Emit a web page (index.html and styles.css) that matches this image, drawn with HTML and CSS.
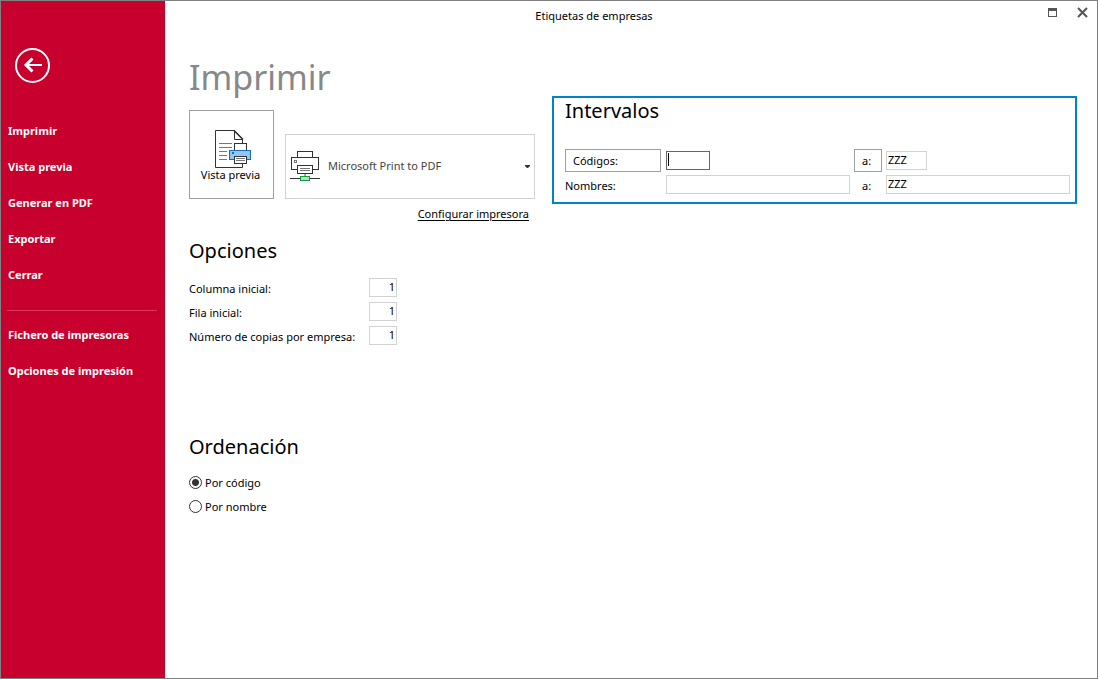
FILE: index.html
```html
<!DOCTYPE html>
<html lang="es">
<head>
<meta charset="utf-8">
<title>Etiquetas de empresas</title>
<link rel="stylesheet" href="styles.css">
</head>
<body>
<div class="window">
  <nav class="sidebar">
    <button class="back" type="button" aria-label="Volver">
      <svg width="35" height="35" viewBox="0 0 35 35" fill="none" stroke="#fff">
        <circle cx="17.500" cy="17.500" r="16.500" stroke-width="2"/>
        <path d="M10 17H27" stroke-width="2"/>
        <path d="M17.500 10.500L11 17L17.500 23.500" stroke-width="3"/>
      </svg>
    </button>
    <ul class="menu">
      <li><a href="#">Imprimir</a></li>
      <li><a href="#">Vista previa</a></li>
      <li><a href="#">Generar en PDF</a></li>
      <li><a href="#">Exportar</a></li>
      <li><a href="#">Cerrar</a></li>
    </ul>
    <hr class="divider">
    <ul class="menu">
      <li><a href="#">Fichero de impresoras</a></li>
      <li><a href="#">Opciones de impresión</a></li>
    </ul>
  </nav>
  <div class="workspace">
    <header class="titlebar">
      <span class="caption">Etiquetas de empresas</span>
      <div class="controls">
        <button type="button" aria-label="Maximizar">
          <svg width="11" height="11" viewBox="0 0 11 11" fill="none" stroke="#555" shape-rendering="crispEdges">
            <rect x="1.500" y="1.500" width="8" height="8"/>
            <path d="M1 2.500H10" stroke-width="3"/>
          </svg>
        </button>
        <button type="button" aria-label="Cerrar ventana">
          <svg width="11" height="11" viewBox="0 0 11 11" fill="none" stroke="#555" stroke-width="2">
            <path d="M1 1L10 10M10 1L1 10"/>
          </svg>
        </button>
      </div>
    </header>
    <main class="content">
      <div class="column">
        <h1 class="title">Imprimir</h1>
        <section class="printing">
          <button class="preview" type="button">
            <svg width="38" height="40" viewBox="0 0 38 40" fill="#fff" stroke="#333">
              <path d="M1.500 1.500H20.500L28.500 9.500V38.500H1.500Z"/>
              <path d="M20.500 1.500V10.500H28.500" fill="none"/>
              <path d="M20 1.500L29 10.500" stroke-width="1.500"/>
              <path d="M5 14.500H18M5 18.500H18M5 22.500H13M5 26.500H13M5 30.500H13" stroke="#777"/>
              <rect x="20.500" y="14.500" width="12" height="7"/>
              <rect x="15.500" y="21.500" width="21" height="9" fill="#92c5f0" stroke="#1b6db5"/>
              <rect x="18" y="23" width="2" height="2" fill="#1b6db5" stroke="none"/>
              <rect x="20.500" y="27.500" width="12" height="7"/>
              <path d="M22 29.500H31M22 31.500H31" stroke="#777"/>
            </svg>
            <span>Vista previa</span>
          </button>
          <div class="printer">
            <svg class="printer-icon" width="30" height="31" viewBox="0 0 30 31" fill="#fff" stroke="#333">
              <rect x="7.500" y="1.500" width="15" height="6"/>
              <rect x="1.500" y="7.500" width="27" height="12"/>
              <rect x="4.500" y="10.500" width="2" height="2" stroke="#777"/>
              <rect x="7.500" y="15.500" width="15" height="8"/>
              <path d="M10 18.500H20M10 20.500H20" stroke="#777"/>
              <path d="M15 24V27" stroke="#aaa" stroke-width="2"/>
              <path d="M0 28.500H30"/>
              <rect x="10.500" y="26.500" width="9" height="4" fill="#b5dfb8" stroke="#149a44"/>
            </svg>
            <select class="printer-select" aria-label="Impresora">
              <option>Microsoft Print to PDF</option>
            </select>
            <svg class="arrow" width="5" height="3" viewBox="0 0 5 3" fill="#333"><path d="M0 0H5V1L3 3H2L0 1Z"/></svg>
          </div>
          <a class="configure" href="#">Configurar impresora</a>
        </section>
        <section class="options">
          <h2>Opciones</h2>
          <div class="option"><label for="col">Columna inicial:</label><input id="col" type="text" value="1"></div>
          <div class="option"><label for="row">Fila inicial:</label><input id="row" type="text" value="1"></div>
          <div class="option"><label for="copies">Número de copias por empresa:</label><input id="copies" type="text" value="1"></div>
        </section>
        <section class="order">
          <h2>Ordenación</h2>
          <label class="choice"><input type="radio" name="order" checked>Por código</label>
          <label class="choice"><input type="radio" name="order">Por nombre</label>
        </section>
      </div>
      <section class="ranges">
        <h2>Intervalos</h2>
        <div class="range-grid">
          <button class="pick" type="button">Códigos:</button>
          <div class="code focused"><input type="text" aria-label="Código desde"><span class="caret"></span></div>
          <button class="pick" type="button">a:</button>
          <div class="code"><input type="text" value="ZZZ" aria-label="Código hasta"></div>
          <label class="name" for="from">Nombres:</label>
          <input class="from" id="from" type="text">
          <label class="name to" for="until">a:</label>
          <input id="until" type="text" value="ZZZ">
        </div>
      </section>
    </main>
  </div>
</div>
</body>
</html>
```
FILE: styles.css
```css
* { box-sizing: border-box; }

body {
  margin: 0;
  font: 11px/16px "Noto Sans", "Open Sans", sans-serif;
  color: #000;
  background: #fff;
}

button, input, select { font: inherit; color: inherit; margin: 0; }

.window {
  display: flex;
  min-height: 100vh;
  border: 1px solid #808080;
}

.sidebar {
  flex: none;
  width: 164px;
  padding: 47px 8px 0 6px;
  background: #c8002d;
}

.back {
  display: block;
  margin: 0 0 30px 8px;
  padding: 0;
  border: 0;
  background: none;
}
.back svg, .controls svg { display: block; }

.menu { margin: 0; padding: 0 0 0 1px; list-style: none; }
.menu a {
  display: block;
  height: 36px;
  line-height: 36px;
  color: #fff;
  font-weight: 700;
  text-decoration: none;
}
.divider {
  height: 1px;
  margin: 17px 0 6px;
  border: 0;
  background: #d63a5c;
}

.workspace { flex: 1; min-width: 0; }

.titlebar { display: flex; height: 30px; }
.caption {
  flex: 1;
  margin-left: -24px;
  padding-top: 7px;
  text-align: center;
}
.controls {
  display: flex;
  align-items: flex-start;
  gap: 19px;
  padding: 6px 9px 0 0;
}
.controls button { padding: 0; border: 0; background: none; }

.content {
  display: flex;
  align-items: flex-start;
  gap: 17px;
  padding: 0 20px 20px 24px;
}
.column { flex: none; width: 346px; }

.title {
  margin: 0;
  padding-top: 23px;
  font-size: 34px;
  line-height: 46px;
  font-weight: 400;
  color: #888;
}
h2 {
  margin: 0;
  font-size: 20px;
  line-height: 28px;
  font-weight: 400;
}

.printing {
  display: grid;
  grid-template-columns: 85px 1fr;
  column-gap: 11px;
  row-gap: 7px;
  margin-top: 10px;
}
.preview {
  display: flex;
  flex-direction: column;
  align-items: center;
  height: 89px;
  padding: 18px 2px 0 0;
  border: 1px solid #a0a0a0;
  background: #fff;
}
.preview svg { margin-left: 5px; }
.preview span { margin-top: -2px; }
.printer {
  position: relative;
  align-self: end;
  height: 65px;
}
.printer-select {
  width: 100%;
  height: 100%;
  padding: 0 20px 2px 42px;
  border: 1px solid #d2d2d2;
  border-radius: 0;
  background: #fff;
  color: #444;
  appearance: none;
}
.printer-icon { position: absolute; left: 5px; top: 16px; pointer-events: none; }
.arrow { position: absolute; right: 5px; top: 31px; pointer-events: none; }
.configure {
  grid-column: 2;
  justify-self: end;
  margin-right: 6px;
  color: #000;
  text-underline-offset: 2px;
}

input[type="text"] {
  width: 100%;
  height: 19px;
  padding: 0 2px 2px 1px;
  border: 1px solid #d2d2d2;
  background: #fff;
}

.options { margin-top: 15px; }
.options h2 { margin-bottom: 13px; }
.option { display: flex; align-items: flex-start; height: 24px; }
.option label { width: 180px; padding-top: 3px; }
.option input[type="text"] { width: 28px; padding-right: 1px; text-align: right; }

.order { margin-top: 83px; }
.order h2 { margin-bottom: 10px; }
.choice { display: flex; align-items: center; gap: 3px; height: 24px; }
.choice input {
  width: 13px;
  height: 13px;
  margin: 0 0 1px;
  border: 1px solid #333;
  border-radius: 50%;
  background: #fff;
  appearance: none;
}
.choice input:checked { background: radial-gradient(circle, #333 3px, #fff 4px); }

.ranges {
  flex: 1;
  min-width: 0;
  margin-top: 65px;
  padding: 0 5px 8px 11px;
  border: 2px solid #0083c8;
}
.ranges h2 { line-height: 26px; }
.range-grid {
  display: grid;
  grid-template-columns: 97px 1fr 28px 1fr;
  gap: 3px 4px;
  align-items: center;
  margin-top: 25px;
}
.pick {
  height: 23px;
  padding: 0 7px;
  border: 1px solid #a0a0a0;
  background: #fff;
  text-align: left;
}
.pick:first-child { margin-right: 1px; }
.name { padding-top: 2px; }
.to { padding-left: 8px; }
.code { position: relative; width: 41px; height: 19px; }
.focused { width: 44px; }
.focused input[type="text"] { border-color: #666; }
.caret {
  position: absolute;
  left: 2px;
  top: 2px;
  width: 1px;
  height: 13px;
  background: #000;
}
```
